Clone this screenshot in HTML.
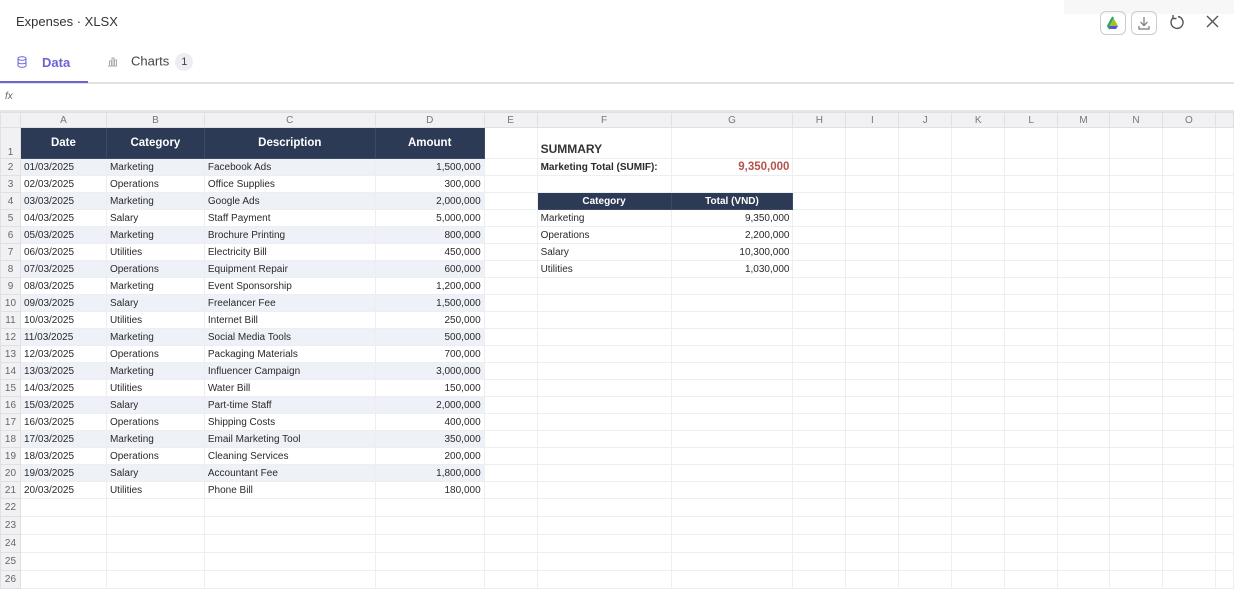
<!DOCTYPE html>
<html><head><meta charset="utf-8"><style>
*{margin:0;padding:0;box-sizing:border-box}
body{width:1234px;height:588px;overflow:hidden;background:#fff;font-family:"Liberation Sans",Arial,sans-serif;position:relative;color:#222}
.title{position:absolute;left:16px;top:14px;font-size:13px;color:#333}
.tabs{position:absolute;left:0;top:50px;width:1234px;height:34px;border-bottom:2px solid #e2e2e6}
.tab{position:absolute;top:5px;font-size:13px;line-height:16px}
.ul{position:absolute;left:0;top:31px;width:88px;height:2px;background:#6b63d6}
.badge{display:inline-block;width:18px;height:18px;border-radius:9px;background:#eeeef2;font-size:11px;text-align:center;line-height:18px;margin-left:6px;color:#444;vertical-align:middle}
.fx{position:absolute;left:5px;top:91px;font-size:10px;font-style:italic;color:#666}
.fbar{position:absolute;left:0;top:110px;width:1234px;height:2px;background:#e6e6e6}
table{position:absolute;left:0;top:112px;border-collapse:collapse;table-layout:fixed;font-size:10px}
td{border:1px solid #eceef1;height:17px;padding:0 3px;white-space:nowrap;overflow:hidden;color:#2a2a2a}
tr.h td{background:#f1f1f3;color:#777;text-align:center;height:15px;border-color:#e0e0e3}
td.rn{background:#f1f1f3;color:#666;text-align:center;padding:0;border-color:#e0e0e3}
tr.r1 td{height:31px}
tr.r1 td.rn{vertical-align:bottom}
.hd{background:#2d3a55!important;color:#fff!important;font-weight:bold;text-align:center;font-size:11.5px;border-color:#3d4a66!important}
.sh{background:#eef1f7}
.n{text-align:right}
tr.e td{height:18px}
.btn{position:absolute;top:11px;width:26px;height:24px;border:1px solid #ccc;border-radius:6px}
</style></head><body>
<div style="position:absolute;left:1064px;top:0;width:170px;height:14px;background:#f7f7f7"></div>
<div class="title">Expenses · XLSX</div>
<div class="btn" style="left:1100px"><svg width="24" height="22" viewBox="0 0 24 22"><path d="M12 5l5 9H7z" fill="#9ac52c"/><path d="M7 14h10l-2 3H9z" fill="#5a4de0"/><path d="M12 5l-5 9 2 3" fill="none" stroke="#2aa06a" stroke-width="2"/></svg></div>
<div class="btn" style="left:1131px"><svg width="24" height="22" viewBox="0 0 24 22" fill="none" stroke="#777" stroke-width="1.2"><path d="M12 5v8M8.5 10l3.5 3.5 3.5-3.5M7 14v3h10v-3"/></svg></div>
<svg style="position:absolute;left:1168px;top:13px" width="18" height="18" viewBox="0 0 18 18" fill="none" stroke="#555" stroke-width="1.4"><path d="M5 5a6 6 0 1 0 5-1.5"/><path d="M5 2v3.5h3.5"/></svg>
<svg style="position:absolute;left:1205px;top:14px" width="15" height="15" viewBox="0 0 15 15" stroke="#555" stroke-width="1.4"><path d="M2 2l11 11M13 2L2 13"/></svg>
<div class="tabs">
<svg style="position:absolute;left:17px;top:6px" width="10" height="12" viewBox="0 0 10 12" fill="none" stroke="#6b63d6" stroke-width="1"><ellipse cx="5" cy="2.5" rx="4" ry="1.8"/><path d="M1 2.5v7c0 1 1.8 1.8 4 1.8s4-.8 4-1.8v-7M1 6c0 1 1.8 1.8 4 1.8S9 7 9 6"/></svg>
<div class="tab" style="left:42px;color:#6b63d6;font-weight:600">Data</div>
<svg style="position:absolute;left:107px;top:6px" width="11" height="11" viewBox="0 0 11 11" fill="none" stroke="#aaa" stroke-width="1"><path d="M1 10h9M2.5 10V5h2v5M5 10V2h2v8M7.5 10V4h2v6"/></svg>
<div class="tab" style="left:131px;top:3px;color:#444">Charts<span class="badge">1</span></div>
<div class="ul"></div>
</div>
<div class="fx">fx</div>
<div class="fbar"></div>
<table>
<colgroup><col style="width:20px"><col style="width:86px"><col style="width:98px"><col style="width:171px"><col style="width:109px"><col style="width:53px"><col style="width:134px"><col style="width:122px"><col style="width:53px"><col style="width:53px"><col style="width:53px"><col style="width:53px"><col style="width:53px"><col style="width:52px"><col style="width:53px"><col style="width:53px"><col style="width:18px"></colgroup>
<tr class="h"><td class="rn"></td><td>A</td><td>B</td><td>C</td><td>D</td><td>E</td><td>F</td><td>G</td><td>H</td><td>I</td><td>J</td><td>K</td><td>L</td><td>M</td><td>N</td><td>O</td><td></td></tr>
<tr class="r1"><td class="rn">1</td><td class="hd">Date</td><td class="hd">Category</td><td class="hd">Description</td><td class="hd">Amount</td><td></td><td style="font-weight:bold;font-size:12px;color:#333;vertical-align:bottom;padding-bottom:2px">SUMMARY</td><td></td><td></td><td></td><td></td><td></td><td></td><td></td><td></td><td></td><td></td></tr>
<tr><td class="rn">2</td><td class="sh">01/03/2025</td><td class="sh">Marketing</td><td class="sh">Facebook Ads</td><td class="sh n">1,500,000</td><td></td><td style="font-weight:bold">Marketing Total (SUMIF):</td><td class="n" style="font-weight:bold;color:#b5524a;font-size:11.5px">9,350,000</td><td></td><td></td><td></td><td></td><td></td><td></td><td></td><td></td><td></td></tr>
<tr><td class="rn">3</td><td>02/03/2025</td><td>Operations</td><td>Office Supplies</td><td class="n">300,000</td><td></td><td></td><td></td><td></td><td></td><td></td><td></td><td></td><td></td><td></td><td></td><td></td></tr>
<tr><td class="rn">4</td><td class="sh">03/03/2025</td><td class="sh">Marketing</td><td class="sh">Google Ads</td><td class="sh n">2,000,000</td><td></td><td class="hd" style="font-size:10px">Category</td><td class="hd" style="font-size:10px">Total (VND)</td><td></td><td></td><td></td><td></td><td></td><td></td><td></td><td></td><td></td></tr>
<tr><td class="rn">5</td><td>04/03/2025</td><td>Salary</td><td>Staff Payment</td><td class="n">5,000,000</td><td></td><td>Marketing</td><td class="n">9,350,000</td><td></td><td></td><td></td><td></td><td></td><td></td><td></td><td></td><td></td></tr>
<tr><td class="rn">6</td><td class="sh">05/03/2025</td><td class="sh">Marketing</td><td class="sh">Brochure Printing</td><td class="sh n">800,000</td><td></td><td>Operations</td><td class="n">2,200,000</td><td></td><td></td><td></td><td></td><td></td><td></td><td></td><td></td><td></td></tr>
<tr><td class="rn">7</td><td>06/03/2025</td><td>Utilities</td><td>Electricity Bill</td><td class="n">450,000</td><td></td><td>Salary</td><td class="n">10,300,000</td><td></td><td></td><td></td><td></td><td></td><td></td><td></td><td></td><td></td></tr>
<tr><td class="rn">8</td><td class="sh">07/03/2025</td><td class="sh">Operations</td><td class="sh">Equipment Repair</td><td class="sh n">600,000</td><td></td><td>Utilities</td><td class="n">1,030,000</td><td></td><td></td><td></td><td></td><td></td><td></td><td></td><td></td><td></td></tr>
<tr><td class="rn">9</td><td>08/03/2025</td><td>Marketing</td><td>Event Sponsorship</td><td class="n">1,200,000</td><td></td><td></td><td></td><td></td><td></td><td></td><td></td><td></td><td></td><td></td><td></td><td></td></tr>
<tr><td class="rn">10</td><td class="sh">09/03/2025</td><td class="sh">Salary</td><td class="sh">Freelancer Fee</td><td class="sh n">1,500,000</td><td></td><td></td><td></td><td></td><td></td><td></td><td></td><td></td><td></td><td></td><td></td><td></td></tr>
<tr><td class="rn">11</td><td>10/03/2025</td><td>Utilities</td><td>Internet Bill</td><td class="n">250,000</td><td></td><td></td><td></td><td></td><td></td><td></td><td></td><td></td><td></td><td></td><td></td><td></td></tr>
<tr><td class="rn">12</td><td class="sh">11/03/2025</td><td class="sh">Marketing</td><td class="sh">Social Media Tools</td><td class="sh n">500,000</td><td></td><td></td><td></td><td></td><td></td><td></td><td></td><td></td><td></td><td></td><td></td><td></td></tr>
<tr><td class="rn">13</td><td>12/03/2025</td><td>Operations</td><td>Packaging Materials</td><td class="n">700,000</td><td></td><td></td><td></td><td></td><td></td><td></td><td></td><td></td><td></td><td></td><td></td><td></td></tr>
<tr><td class="rn">14</td><td class="sh">13/03/2025</td><td class="sh">Marketing</td><td class="sh">Influencer Campaign</td><td class="sh n">3,000,000</td><td></td><td></td><td></td><td></td><td></td><td></td><td></td><td></td><td></td><td></td><td></td><td></td></tr>
<tr><td class="rn">15</td><td>14/03/2025</td><td>Utilities</td><td>Water Bill</td><td class="n">150,000</td><td></td><td></td><td></td><td></td><td></td><td></td><td></td><td></td><td></td><td></td><td></td><td></td></tr>
<tr><td class="rn">16</td><td class="sh">15/03/2025</td><td class="sh">Salary</td><td class="sh">Part-time Staff</td><td class="sh n">2,000,000</td><td></td><td></td><td></td><td></td><td></td><td></td><td></td><td></td><td></td><td></td><td></td><td></td></tr>
<tr><td class="rn">17</td><td>16/03/2025</td><td>Operations</td><td>Shipping Costs</td><td class="n">400,000</td><td></td><td></td><td></td><td></td><td></td><td></td><td></td><td></td><td></td><td></td><td></td><td></td></tr>
<tr><td class="rn">18</td><td class="sh">17/03/2025</td><td class="sh">Marketing</td><td class="sh">Email Marketing Tool</td><td class="sh n">350,000</td><td></td><td></td><td></td><td></td><td></td><td></td><td></td><td></td><td></td><td></td><td></td><td></td></tr>
<tr><td class="rn">19</td><td>18/03/2025</td><td>Operations</td><td>Cleaning Services</td><td class="n">200,000</td><td></td><td></td><td></td><td></td><td></td><td></td><td></td><td></td><td></td><td></td><td></td><td></td></tr>
<tr><td class="rn">20</td><td class="sh">19/03/2025</td><td class="sh">Salary</td><td class="sh">Accountant Fee</td><td class="sh n">1,800,000</td><td></td><td></td><td></td><td></td><td></td><td></td><td></td><td></td><td></td><td></td><td></td><td></td></tr>
<tr><td class="rn">21</td><td>20/03/2025</td><td>Utilities</td><td>Phone Bill</td><td class="n">180,000</td><td></td><td></td><td></td><td></td><td></td><td></td><td></td><td></td><td></td><td></td><td></td><td></td></tr>
<tr class="e"><td class="rn">22</td><td></td><td></td><td></td><td></td><td></td><td></td><td></td><td></td><td></td><td></td><td></td><td></td><td></td><td></td><td></td><td></td></tr>
<tr class="e"><td class="rn">23</td><td></td><td></td><td></td><td></td><td></td><td></td><td></td><td></td><td></td><td></td><td></td><td></td><td></td><td></td><td></td><td></td></tr>
<tr class="e"><td class="rn">24</td><td></td><td></td><td></td><td></td><td></td><td></td><td></td><td></td><td></td><td></td><td></td><td></td><td></td><td></td><td></td><td></td></tr>
<tr class="e"><td class="rn">25</td><td></td><td></td><td></td><td></td><td></td><td></td><td></td><td></td><td></td><td></td><td></td><td></td><td></td><td></td><td></td><td></td></tr>
<tr class="e"><td class="rn">26</td><td></td><td></td><td></td><td></td><td></td><td></td><td></td><td></td><td></td><td></td><td></td><td></td><td></td><td></td><td></td><td></td></tr>
</table>
</body></html>
